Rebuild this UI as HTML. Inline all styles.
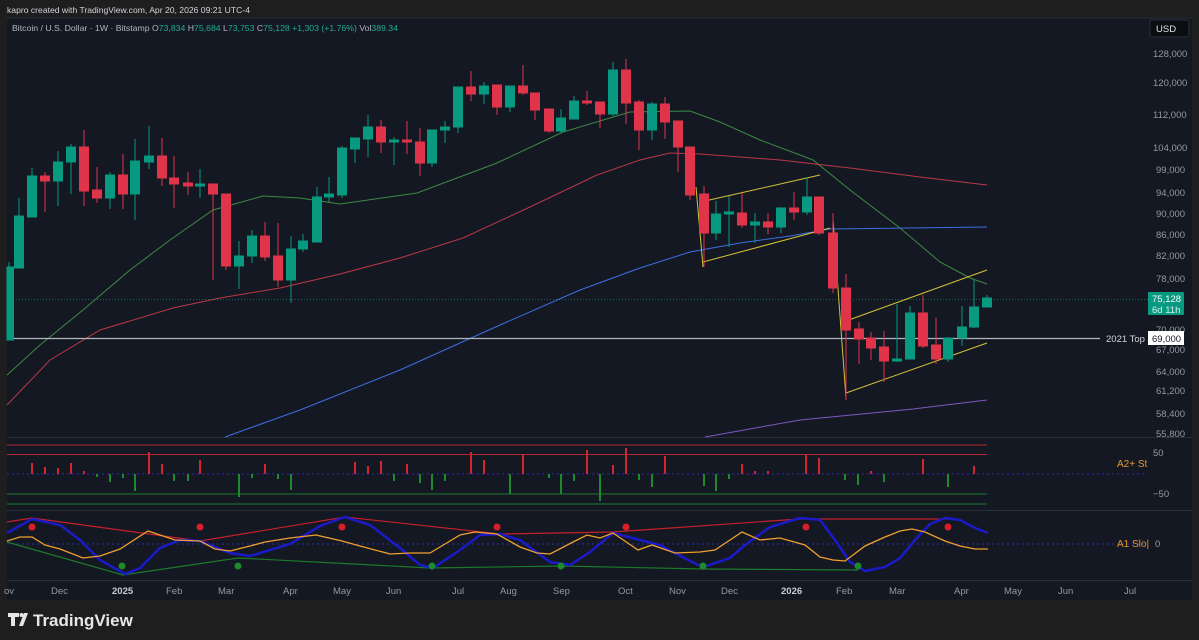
<!DOCTYPE html>
<html><head><meta charset="utf-8"><style>
html,body{margin:0;padding:0;background:#1e1e1e;width:1199px;height:640px;overflow:hidden}
svg{display:block}
text{font-family:"Liberation Sans",sans-serif}
</style></head><body>
<svg width="1199" height="640" viewBox="0 0 1199 640" xmlns="http://www.w3.org/2000/svg">
<rect width="1199" height="640" fill="#1e1e1e"/>
<text x="7" y="13" font-size="8.6" fill="#d1d4dc">kapro created with TradingView.com, Apr 20, 2026 09:21 UTC-4</text>
<rect x="7" y="18" width="1185" height="582" fill="#141823"/>
<line x1="7" y1="18" x2="1192" y2="18" fill="none" stroke="#2a2e39"/>
<!-- legend -->
<text x="12" y="31" font-size="8.7" fill="#b2b5be">Bitcoin / U.S. Dollar · 1W · Bitstamp <tspan>O</tspan><tspan fill="#22ab94">73,834</tspan> <tspan>H</tspan><tspan fill="#22ab94">75,684</tspan> <tspan>L</tspan><tspan fill="#22ab94">73,753</tspan> <tspan>C</tspan><tspan fill="#22ab94">75,128 +1,303 (+1.76%)</tspan> <tspan>Vol</tspan><tspan fill="#22ab94">389.34</tspan></text>
<rect x="1150" y="20" width="39" height="17" rx="2" fill="#0c0d10" stroke="#2a2e39"/>
<text x="1156" y="32" font-size="9.5" fill="#e0e3eb">USD</text>
<!-- pane separators -->
<line x1="7" y1="437.5" x2="1192" y2="437.5" stroke="#2a2e39"/>
<line x1="7" y1="510.5" x2="1192" y2="510.5" stroke="#2a2e39"/>
<line x1="7" y1="580.5" x2="1192" y2="580.5" stroke="#2a2e39"/>
<!-- price axis labels -->
<g font-size="9.5" fill="#9598a1">
<text x="1153" y="57">128,000</text><text x="1153" y="86">120,000</text><text x="1153" y="118">112,000</text>
<text x="1153" y="151">104,000</text><text x="1156" y="173">99,000</text><text x="1156" y="196">94,000</text>
<text x="1156" y="217">90,000</text><text x="1156" y="238">86,000</text><text x="1156" y="259">82,000</text>
<text x="1156" y="282">78,000</text><text x="1156" y="333">70,000</text><text x="1156" y="353">67,000</text>
<text x="1156" y="375">64,000</text><text x="1156" y="394">61,200</text><text x="1156" y="417">58,400</text>
<text x="1156" y="437">55,800</text>
<text x="1153" y="456">50</text><text x="1153" y="497">−50</text><text x="1155" y="547">0</text>
</g>
<!-- MAs -->
<polyline fill="none" stroke="#4caf50" stroke-opacity=".75" stroke-width="1" points="7,375 40,345 83,310 130,270 170,240 213,210 263,196 300,198 340,204 417,193 497,163 563,132 630,112 690,111 720,122 760,140 800,155 813,160 850,190 900,228 940,262 970,278 987,284"/>
<polyline fill="none" stroke="#e2404f" stroke-opacity=".8" stroke-width="1" points="7,405 50,360 100,330 173,308 220,298 280,288 340,274 400,258 463,238 530,207 597,175 640,160 670,153 700,154 780,160 850,168 920,177 987,185"/>
<polyline fill="none" stroke="#3d6fe0" stroke-width="1" points="225,437 300,410 400,370 500,325 580,290 640,268 690,252 740,243 790,236 830,229 987,227"/>
<polyline fill="none" stroke="#7e57c2" stroke-width="1" points="705,437 800,420 913,409 987,400"/>
<!-- lines -->
<line x1="7" y1="299.5" x2="1148" y2="299.5" stroke="#22ab94" stroke-opacity=".5" stroke-dasharray="1 2"/>
<line x1="7" y1="338.5" x2="1100" y2="338.5" stroke="#b2b5be" stroke-width="1.3"/>
<text x="1106" y="342" font-size="9.5" fill="#d1d4dc">2021 Top</text>
<rect x="1148" y="331" width="36" height="14" fill="#ffffff"/>
<text x="1152" y="342" font-size="9.5" fill="#131722">69,000</text>
<rect x="1148" y="292" width="36" height="23" rx="1" fill="#089981"/>
<text x="1152" y="302" font-size="9.5" fill="#fff">75,128</text>
<text x="1152" y="313" font-size="9.5" fill="#d8f0ea">6d 11h</text>
<!-- channels -->
<g stroke="#d4c23a" stroke-width="1" fill="none">
<line x1="705" y1="201" x2="820" y2="175"/><line x1="703" y1="262" x2="830" y2="228"/><line x1="696" y1="187" x2="703" y2="267"/>
<line x1="846" y1="321" x2="987" y2="270"/><line x1="846" y1="393" x2="987" y2="343"/><line x1="833" y1="220" x2="846" y2="398"/>
</g>
<!-- candles -->
<g id="c">
<g stroke="#089981" fill="#089981">
<line x1="9" y1="262" x2="9" y2="340"/><rect x="7" y="267" width="6.5" height="73"/>
<line x1="19" y1="198" x2="19" y2="268"/><rect x="14.5" y="216" width="9" height="52"/>
<line x1="32" y1="168" x2="32" y2="217"/><rect x="27.5" y="176" width="9" height="41"/>
<line x1="58" y1="151" x2="58" y2="206"/><rect x="53.5" y="162" width="9" height="19"/>
<line x1="71" y1="144" x2="71" y2="194"/><rect x="66.5" y="147" width="9" height="15"/>
<line x1="110" y1="172" x2="110" y2="209"/><rect x="105.5" y="175" width="9" height="23"/>
<line x1="135" y1="139" x2="135" y2="220"/><rect x="130.5" y="161" width="9" height="33"/>
<line x1="149" y1="126" x2="149" y2="169"/><rect x="144.5" y="156" width="9" height="6"/>
<line x1="200" y1="169" x2="200" y2="198"/><rect x="195.5" y="184" width="9" height="2"/>
<line x1="239" y1="241" x2="239" y2="289"/><rect x="234.5" y="256" width="9" height="10"/>
<line x1="252" y1="230" x2="252" y2="263"/><rect x="247.5" y="236" width="9" height="20"/>
<line x1="291" y1="236" x2="291" y2="303"/><rect x="286.5" y="249" width="9" height="31"/>
<line x1="303" y1="234" x2="303" y2="252"/><rect x="298.5" y="241" width="9" height="8"/>
<line x1="317" y1="187" x2="317" y2="242"/><rect x="312.5" y="197" width="9" height="45"/>
<line x1="329" y1="177" x2="329" y2="202"/><rect x="324.5" y="194" width="9" height="3"/>
<line x1="342" y1="146" x2="342" y2="198"/><rect x="337.5" y="148" width="9" height="47"/>
<line x1="355" y1="138" x2="355" y2="163"/><rect x="350.5" y="138" width="9" height="11"/>
<line x1="368" y1="115" x2="368" y2="157"/><rect x="363.5" y="127" width="9" height="12"/>
<line x1="394" y1="137" x2="394" y2="165"/><rect x="389.5" y="140" width="9" height="2"/>
<line x1="432" y1="130" x2="432" y2="167"/><rect x="427.5" y="130" width="9" height="33"/>
<line x1="445" y1="121" x2="445" y2="143"/><rect x="440.5" y="127" width="9" height="3"/>
<line x1="458" y1="87" x2="458" y2="133"/><rect x="453.5" y="87" width="9" height="40"/>
<line x1="484" y1="82" x2="484" y2="104"/><rect x="479.5" y="86" width="9" height="8"/>
<line x1="510" y1="86" x2="510" y2="112"/><rect x="505.5" y="86" width="9" height="21"/>
<line x1="561" y1="109" x2="561" y2="133"/><rect x="556.5" y="118" width="9" height="13"/>
<line x1="574" y1="96" x2="574" y2="119"/><rect x="569.5" y="101" width="9" height="18"/>
<line x1="613" y1="62" x2="613" y2="116"/><rect x="608.5" y="70" width="9" height="44"/>
<line x1="652" y1="102" x2="652" y2="140"/><rect x="647.5" y="104" width="9" height="26"/>
<line x1="716" y1="201" x2="716" y2="240"/><rect x="711.5" y="214" width="9" height="19"/>
<line x1="729" y1="196" x2="729" y2="247"/><rect x="724.5" y="212" width="9" height="2"/>
<line x1="755" y1="213" x2="755" y2="243"/><rect x="750.5" y="222" width="9" height="3"/>
<line x1="781" y1="207" x2="781" y2="233"/><rect x="776.5" y="208" width="9" height="19"/>
<line x1="807" y1="177" x2="807" y2="215"/><rect x="802.5" y="197" width="9" height="15"/>
<line x1="897" y1="304" x2="897" y2="362"/><rect x="892.5" y="359" width="9" height="2"/>
<line x1="910" y1="306" x2="910" y2="359"/><rect x="905.5" y="313" width="9" height="46"/>
<line x1="948" y1="337" x2="948" y2="362"/><rect x="943.5" y="338" width="9" height="21"/>
<line x1="962" y1="306" x2="962" y2="346"/><rect x="957.5" y="327" width="9" height="11"/>
<line x1="974" y1="280" x2="974" y2="328"/><rect x="969.5" y="307" width="9" height="20"/>
<line x1="987" y1="295" x2="987" y2="307"/><rect x="982.5" y="298" width="9" height="9"/>
</g>
<g stroke="#e0344a" fill="#e0344a">
<line x1="45" y1="172" x2="45" y2="212"/><rect x="40.5" y="176" width="9" height="5"/>
<line x1="84" y1="130" x2="84" y2="206"/><rect x="79.5" y="147" width="9" height="44"/>
<line x1="97" y1="167" x2="97" y2="203"/><rect x="92.5" y="190" width="9" height="8"/>
<line x1="123" y1="154" x2="123" y2="209"/><rect x="118.5" y="175" width="9" height="19"/>
<line x1="162" y1="138" x2="162" y2="186"/><rect x="157.5" y="156" width="9" height="22"/>
<line x1="174" y1="156" x2="174" y2="208"/><rect x="169.5" y="178" width="9" height="6"/>
<line x1="188" y1="172" x2="188" y2="195"/><rect x="183.5" y="183" width="9" height="3"/>
<line x1="213" y1="184" x2="213" y2="280"/><rect x="208.5" y="184" width="9" height="10"/>
<line x1="226" y1="194" x2="226" y2="270"/><rect x="221.5" y="194" width="9" height="72"/>
<line x1="265" y1="222" x2="265" y2="261"/><rect x="260.5" y="236" width="9" height="21"/>
<line x1="278" y1="223" x2="278" y2="287"/><rect x="273.5" y="256" width="9" height="24"/>
<line x1="381" y1="120" x2="381" y2="153"/><rect x="376.5" y="127" width="9" height="15"/>
<line x1="407" y1="121" x2="407" y2="154"/><rect x="402.5" y="140" width="9" height="2"/>
<line x1="420" y1="128" x2="420" y2="176"/><rect x="415.5" y="142" width="9" height="21"/>
<line x1="471" y1="71" x2="471" y2="101"/><rect x="466.5" y="87" width="9" height="7"/>
<line x1="497" y1="85" x2="497" y2="115"/><rect x="492.5" y="85" width="9" height="22"/>
<line x1="523" y1="65" x2="523" y2="95"/><rect x="518.5" y="86" width="9" height="7"/>
<line x1="535" y1="93" x2="535" y2="120"/><rect x="530.5" y="93" width="9" height="17"/>
<line x1="549" y1="109" x2="549" y2="133"/><rect x="544.5" y="109" width="9" height="22"/>
<line x1="587" y1="91" x2="587" y2="105"/><rect x="582.5" y="101" width="9" height="2"/>
<line x1="600" y1="102" x2="600" y2="128"/><rect x="595.5" y="102" width="9" height="12"/>
<line x1="626" y1="59" x2="626" y2="124"/><rect x="621.5" y="70" width="9" height="33"/>
<line x1="639" y1="100" x2="639" y2="150"/><rect x="634.5" y="102" width="9" height="28"/>
<line x1="665" y1="97" x2="665" y2="139"/><rect x="660.5" y="104" width="9" height="18"/>
<line x1="678" y1="121" x2="678" y2="172"/><rect x="673.5" y="121" width="9" height="26"/>
<line x1="690" y1="147" x2="690" y2="200"/><rect x="685.5" y="147" width="9" height="48"/>
<line x1="704" y1="186" x2="704" y2="267"/><rect x="699.5" y="194" width="9" height="39"/>
<line x1="742" y1="193" x2="742" y2="228"/><rect x="737.5" y="213" width="9" height="12"/>
<line x1="768" y1="213" x2="768" y2="234"/><rect x="763.5" y="222" width="9" height="5"/>
<line x1="794" y1="192" x2="794" y2="220"/><rect x="789.5" y="208" width="9" height="4"/>
<line x1="819" y1="197" x2="819" y2="235"/><rect x="814.5" y="197" width="9" height="36"/>
<line x1="833" y1="213" x2="833" y2="293"/><rect x="828.5" y="233" width="9" height="55"/>
<line x1="846" y1="274" x2="846" y2="400"/><rect x="841.5" y="288" width="9" height="42"/>
<line x1="859" y1="322" x2="859" y2="364"/><rect x="854.5" y="329" width="9" height="10"/>
<line x1="871" y1="332" x2="871" y2="360"/><rect x="866.5" y="338" width="9" height="10"/>
<line x1="884" y1="331" x2="884" y2="382"/><rect x="879.5" y="347" width="9" height="14"/>
<line x1="923" y1="295" x2="923" y2="348"/><rect x="918.5" y="313" width="9" height="33"/>
<line x1="936" y1="318" x2="936" y2="364"/><rect x="931.5" y="345" width="9" height="14"/>
</g>
</g>
<!-- pane 2 -->
<line x1="7" y1="445" x2="987" y2="445" stroke="#b22833" stroke-width="1"/>
<line x1="7" y1="454.5" x2="987" y2="454.5" stroke="#b22833" stroke-width="1"/>
<line x1="7" y1="494" x2="987" y2="494" stroke="#1b7a2a" stroke-width="1"/>
<line x1="7" y1="504" x2="987" y2="504" stroke="#1b7a2a" stroke-width="1"/>
<line x1="7" y1="474" x2="1145" y2="474" stroke="#2a32b0" stroke-dasharray="2 3"/>
<g stroke="#d0262f" stroke-width="2">
<line x1="32" y1="474" x2="32" y2="463"/><line x1="45" y1="474" x2="45" y2="467"/><line x1="58" y1="474" x2="58" y2="468"/><line x1="71" y1="474" x2="71" y2="463"/><line x1="84" y1="474" x2="84" y2="471"/><line x1="149" y1="474" x2="149" y2="452"/><line x1="162" y1="474" x2="162" y2="464"/><line x1="200" y1="474" x2="200" y2="460"/><line x1="265" y1="474" x2="265" y2="464"/><line x1="355" y1="474" x2="355" y2="462"/><line x1="368" y1="474" x2="368" y2="466"/><line x1="381" y1="474" x2="381" y2="461"/><line x1="407" y1="474" x2="407" y2="464"/><line x1="471" y1="474" x2="471" y2="452"/><line x1="484" y1="474" x2="484" y2="460"/><line x1="523" y1="474" x2="523" y2="454"/><line x1="587" y1="474" x2="587" y2="450"/><line x1="613" y1="474" x2="613" y2="465"/><line x1="626" y1="474" x2="626" y2="448"/><line x1="665" y1="474" x2="665" y2="456"/><line x1="742" y1="474" x2="742" y2="464"/><line x1="755" y1="474" x2="755" y2="471"/><line x1="768" y1="474" x2="768" y2="471"/><line x1="806" y1="474" x2="806" y2="454"/><line x1="819" y1="474" x2="819" y2="458"/><line x1="871" y1="474" x2="871" y2="471"/><line x1="923" y1="474" x2="923" y2="459"/><line x1="974" y1="474" x2="974" y2="466"/>
</g>
<g stroke="#1f8a2c" stroke-width="2">
<line x1="97" y1="474" x2="97" y2="477"/><line x1="110" y1="474" x2="110" y2="482"/><line x1="123" y1="474" x2="123" y2="478"/><line x1="135" y1="474" x2="135" y2="491"/><line x1="174" y1="474" x2="174" y2="481"/><line x1="188" y1="474" x2="188" y2="481"/><line x1="239" y1="474" x2="239" y2="497"/><line x1="252" y1="474" x2="252" y2="478"/><line x1="278" y1="474" x2="278" y2="479"/><line x1="291" y1="474" x2="291" y2="490"/><line x1="394" y1="474" x2="394" y2="481"/><line x1="420" y1="474" x2="420" y2="483"/><line x1="432" y1="474" x2="432" y2="490"/><line x1="445" y1="474" x2="445" y2="481"/><line x1="510" y1="474" x2="510" y2="494"/><line x1="549" y1="474" x2="549" y2="478"/><line x1="561" y1="474" x2="561" y2="494"/><line x1="574" y1="474" x2="574" y2="481"/><line x1="600" y1="474" x2="600" y2="501"/><line x1="639" y1="474" x2="639" y2="480"/><line x1="652" y1="474" x2="652" y2="487"/><line x1="704" y1="474" x2="704" y2="486"/><line x1="716" y1="474" x2="716" y2="491"/><line x1="729" y1="474" x2="729" y2="479"/><line x1="845" y1="474" x2="845" y2="480"/><line x1="858" y1="474" x2="858" y2="485"/><line x1="884" y1="474" x2="884" y2="482"/><line x1="948" y1="474" x2="948" y2="487"/>
</g>
<text x="1117" y="467" font-size="10" fill="#e8962e">A2+ St</text>
<!-- pane 3 -->
<line x1="7" y1="544" x2="1145" y2="544" stroke="#2a32b0" stroke-dasharray="2 3"/>
<polyline fill="none" stroke="#c4202c" stroke-width="1.2" points="7,522 32,518 200,541 345,517 500,534 613,532 800,519 947,519"/>
<polyline fill="none" stroke="#1d7a28" stroke-width="1.2" points="7,542 123,575 238,558 430,568 561,566 703,569 858,570"/>
<polyline fill="none" stroke="#1a1ac8" stroke-width="2.5" points="7,533 32,519 60,525 80,540 100,560 125,574 140,568 160,548 180,540 200,541 230,553 250,556 290,544 320,526 345,517 370,525 400,548 420,565 433,568 460,550 480,535 500,534 520,540 550,562 570,565 590,552 613,533 640,540 660,545 690,561 703,567 730,558 745,545 770,527 800,518 820,520 835,540 850,562 865,571 885,567 900,558 915,540 930,524 945,518 960,520 975,528 988,533"/>
<polyline fill="none" stroke="#f0a030" stroke-width="1.3" points="7,541 20,537 32,537 45,545 60,549 83,558 100,556 120,549 148,531 175,540 200,541 215,549 230,551 250,546 265,542 290,538 316,535 342,541 360,546 390,554 410,553 430,553 450,541 460,535 475,532 497,534 520,547 537,553 550,554 575,541 587,535 600,538 613,533 638,550 652,545 675,553 700,552 715,550 730,540 742,532 760,540 780,538 805,545 820,557 833,560 845,561 865,546 885,537 900,531 912,529 925,532 945,541 960,546 975,549 988,549"/>
<g fill="#d81e28"><circle cx="32" cy="527" r="3.5"/><circle cx="200" cy="527" r="3.5"/><circle cx="342" cy="527" r="3.5"/><circle cx="497" cy="527" r="3.5"/><circle cx="626" cy="527" r="3.5"/><circle cx="806" cy="527" r="3.5"/><circle cx="948" cy="527" r="3.5"/></g>
<g fill="#1d8a2c"><circle cx="122" cy="566" r="3.5"/><circle cx="238" cy="566" r="3.5"/><circle cx="432" cy="566" r="3.5"/><circle cx="561" cy="566" r="3.5"/><circle cx="703" cy="566" r="3.5"/><circle cx="858" cy="566" r="3.5"/></g>
<text x="1117" y="547" font-size="10" fill="#e8962e">A1 Slo|</text>
<!-- time axis -->
<g font-size="9.5" fill="#9598a1">
<text x="4" y="594">ov</text><text x="51" y="594">Dec</text><text x="112" y="594" font-weight="bold" fill="#c8cbd3">2025</text><text x="166" y="594">Feb</text><text x="218" y="594">Mar</text><text x="283" y="594">Apr</text><text x="333" y="594">May</text><text x="386" y="594">Jun</text><text x="452" y="594">Jul</text><text x="500" y="594">Aug</text><text x="553" y="594">Sep</text><text x="618" y="594">Oct</text><text x="669" y="594">Nov</text><text x="721" y="594">Dec</text><text x="781" y="594" font-weight="bold" fill="#c8cbd3">2026</text><text x="836" y="594">Feb</text><text x="889" y="594">Mar</text><text x="954" y="594">Apr</text><text x="1004" y="594">May</text><text x="1058" y="594">Jun</text><text x="1124" y="594">Jul</text>
</g>
<!-- footer logo -->
<g fill="#e6e6e6">
<path d="M8 613h11v4h-4v9h-4v-9h-3z"/>
<circle cx="21.5" cy="615" r="2"/>
<path d="M24 613h4l-5 13h-4z"/>
</g>
<text x="33" y="626" font-size="17" font-weight="bold" fill="#e6e6e6">TradingView</text>
</svg>
</body></html>
